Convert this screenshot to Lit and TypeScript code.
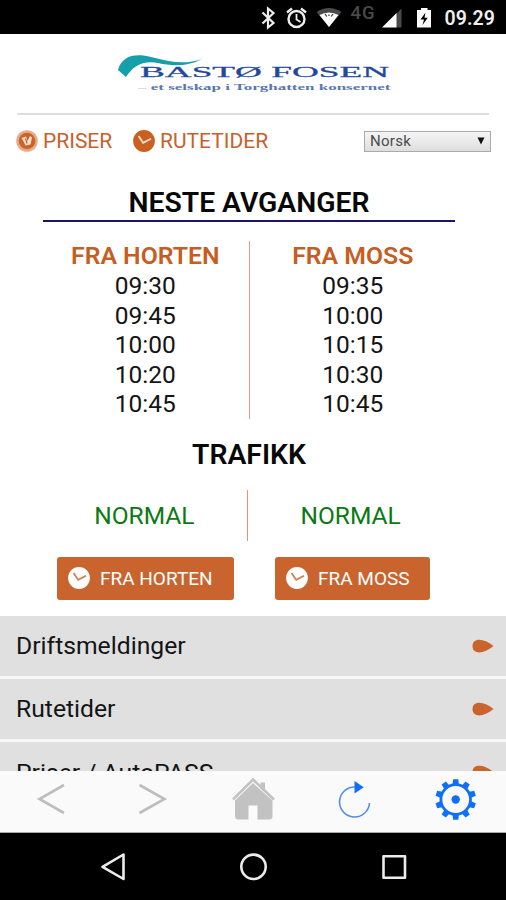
import { LitElement, html, css, svg } from "lit";
import { customElement } from "lit/decorators.js";

const HORTEN = ["09:30", "09:45", "10:00", "10:20", "10:45"];
const MOSS = ["09:35", "10:00", "10:15", "10:30", "10:45"];
const MENU = ["Driftsmeldinger", "Rutetider", "Priser / AutoPASS"];

const clock = (disc: string, hands: string) => html`
  <svg class="clock" width="24" height="24" viewBox="0 0 24 24">
    <circle cx="12" cy="12" r="10.9" fill=${disc} />
    <path d="M6.600 7 L11.200 13.900 L19 9.700" fill="none" stroke=${hands} stroke-width="1.800" />
  </svg>`;

@customElement("app-root")
export class AppRoot extends LitElement {
  static styles = css`
    :host {
      display: flex;
      flex-direction: column;
      width: 506px;
      height: 900px;
      overflow: hidden;
      background: #fff;
      color: #141414;
      font-family: Roboto, "Liberation Sans", sans-serif;
    }
    svg { display: block; flex: none; }
    .status { height: 34px; flex: none; background: #000; display: flex; }
    .page { height: 737px; flex: none; overflow: hidden; display: flex; flex-direction: column; }
    .logo { height: 79px; flex: none; }
    .rule { height: 2px; flex: none; margin: 0 17px; background: #dfdfdf; }
    .tools { height: 52px; flex: none; display: flex; align-items: center; padding: 0 15px 0 15px; }
    .link { display: flex; align-items: center; color: #c9602b; font-size: 21px; line-height: 26px; white-space: nowrap; }
    .link svg { margin-right: 4px; }
    .link span { display: block; }
    .priser { width: 117px; }
    .select {
      margin-left: auto; width: 127px; height: 21px; box-sizing: border-box;
      border: 1px solid #ababab; background: linear-gradient(#f5f5f5, #dedede);
      display: flex; align-items: center; justify-content: space-between;
      padding: 0 5px; font-size: 15px; color: #4a4a4a; letter-spacing: 0.3px;
    }
    .title { text-align: center; font-weight: 600; font-size: 28.3px; color: #080808; white-space: nowrap; }
    .next { height: 55px; box-sizing: border-box; flex: none; margin: 0 51px 0 43px; padding-top: 17px; line-height: 37px; border-bottom: 2px solid #1d1466; }
    .times { height: 178px; flex: none; margin: 19px 50px 0 42px; display: flex; }
    .col { flex: 1; text-align: center; font-size: 24.5px; line-height: 29.6px; }
    .col b { display: block; font-weight: 600; font-size: 24.8px; color: #c65d22; line-height: 30px; }
    .bar { width: 1px; background: #e09c8a; flex: none; }
    .traffic { height: 71px; flex: none; line-height: 72px; padding-right: 8px; }
    .state { height: 51px; flex: none; display: flex; margin: 0 53px 0 42px; }
    .state .bar { width: 1.5px; background: #e29474; }
    .state span { flex: 1; text-align: center; font-size: 24.5px; line-height: 51px; color: #0a7a14; }
    .buttons { flex: none; display: flex; gap: 41px; margin: 15.500px 0 16px 57px; }
    .button { box-sizing: border-box; height: 43px; border-radius: 3px; background: #c9642f; color: #fff; font-size: 19px; display: flex; align-items: center; padding-left: 10px; gap: 9px; white-space: nowrap; }
    .b1 { width: 177px; }
    .b2 { width: 155px; }
    .list { display: flex; flex-direction: column; gap: 3px; background: #f8f8f8; }
    .item { flex: none; height: 60.3px; display: flex; align-items: center; justify-content: space-between; padding: 0 12px 0 16px; background: #e0e0e0; font-size: 24.7px; }
    .bottom { height: 61px; flex: none; background: #fafafa; border-bottom: 1px solid #aaa; }
    .system { height: 67px; flex: none; background: #000; }
  `;

  private status() {
    return svg`<svg width="506" height="34" viewBox="0 0 506 34" font-family="Roboto, sans-serif">
      <path d="M262.5 12.5 L273.5 23 L268 27.5 V8.5 L273.5 13 L262.5 23.5" fill="none" stroke="#eee" stroke-width="2.200" />
      <g fill="none" stroke="#eee" stroke-width="2.400">
        <circle cx="296.5" cy="19" r="8" />
        <path d="M296.5 14 V19.5 L300.5 22" stroke-width="1.8" />
        <path d="M287 12.5 L292 8.5 M306 12.5 L301 8.5" />
      </g>
      <path d="M316.500 12 Q329 4 341.500 12 L329 27 Z" fill="#4a4a4a" />
      <path d="M319.500 15 Q329 10 338.500 15 L329 27 Z" fill="#fff" />
      <path d="M325 14 l1.800 2.500 M333 14 l-1.800 2.500 M329 14.500 v1.500" stroke="#333" stroke-width="1.200" />
      <text x="350.500" y="18.500" font-size="18.500" font-weight="500" textLength="24" fill="#484848">4G</text>
      <path d="M401.500 8.500 V27.500 H396 V14 Z" fill="#4a4a4a" />
      <path d="M382 27.500 L396.500 13 V27.500 Z" fill="#fff" />
      <path d="M421 8 h6.500 v2 h3.500 v17.500 h-14 V10 h4 Z" fill="#fff" />
      <path d="M425.500 12.500 L420.500 19.500 H424 L422.500 25 L427.800 17.800 H424.500 Z" fill="#000" />
      <text x="444.500" y="24.800" font-size="19.500" font-weight="600" textLength="50.500" fill="#eee">09.29</text>
    </svg>`;
  }

  private logo() {
    return svg`<svg width="506" height="79" viewBox="0 34 506 79" font-family="Liberation Serif, serif">
      <path d="M118 70 C122 55 136 53 151 57 C170 62 185 65 202 59 C187 67 171 66 158 63 C143 60 133 66 126 77 Z" fill="#159fab" />
      <text transform="translate(140 77) scale(2.050 1)" font-size="15.500" font-weight="400" textLength="121.500" lengthAdjust="spacingAndGlyphs" fill="#22489c" stroke="#22489c" stroke-width="0.250">BASTØ FOSEN</text>
      <text transform="translate(138 90.300) scale(1.700 1)" font-size="9" font-weight="700" textLength="148.500" lengthAdjust="spacingAndGlyphs" fill="#5878b4"><tspan fill="#b9c6d8">–</tspan> et selskap i Torghatten konsernet</text>
    </svg>`;
  }

  private gear() {
    const teeth = Array.from({ length: 10 }, (_, i) => i * 36);
    return svg`<g transform="translate(455.700 28.500)" fill="#0f70f5">
      ${teeth.map((a) => svg`<path d="M-2.600 -20.300 H2.600 L3.300 -14 H-3.300 Z" transform=${`rotate(${a})`} />`)}
      <circle r="14.800" fill="#fafafa" stroke="#0f70f5" stroke-width="2.800" />
      <circle r="4.200" />
    </g>`;
  }

  render() {
    return html`
      <div class="status">${this.status()}</div>
      <div class="page">
        <div class="logo">${this.logo()}</div>
        <div class="rule"></div>
        <div class="tools">
          <div class="link priser">
            <svg width="24" height="24" viewBox="0 0 24 24">
              <circle cx="12" cy="12" r="10.800" fill="#e5ad8c" />
              <circle cx="12" cy="12" r="8.300" fill="#cc6428" />
              <path d="M6.500 9 L11 7.500 L12.500 12 L15 7 L17 8.500 L15.500 15.500 L10.500 16.500 L8.500 12.500 Z" fill="#f8ded0" />
              <path d="M10.500 9.500 L12 14.500" stroke="#cc6428" stroke-width="1.200" />
            </svg>
            <span>PRISER</span>
          </div>
          <div class="link">${clock("#cb5f20", "#fbe3d3")}<span>RUTETIDER</span></div>
          <div class="select">
            <span>Norsk</span>
            <svg width="8" height="8" viewBox="0 0 8 8"><path d="M0.500 0.500 H7.500 L4 7.500 Z" fill="#111" /></svg>
          </div>
        </div>
        <div class="title next">NESTE AVGANGER</div>
        <div class="times">
          <div class="col"><b>FRA HORTEN</b>${HORTEN.map((t) => html`<div>${t}</div>`)}</div>
          <div class="bar"></div>
          <div class="col"><b>FRA MOSS</b>${MOSS.map((t) => html`<div>${t}</div>`)}</div>
        </div>
        <div class="title traffic">TRAFIKK</div>
        <div class="state"><span>NORMAL</span><div class="bar"></div><span>NORMAL</span></div>
        <div class="buttons">
          <div class="button b1">${clock("#fff", "#cf8055")}<span>FRA HORTEN</span></div>
          <div class="button b2">${clock("#fff", "#cf8055")}<span>FRA MOSS</span></div>
        </div>
        <div class="list">
          ${MENU.map((m) => html`<div class="item"><span>${m}</span>
            <svg width="22" height="14" viewBox="0 0 22 14"><path d="M0.500 7 C0.500 -1.500 11.500 -1.500 21.500 7 C11.500 15.500 0.500 15.500 0.500 7 Z" fill="#cb632c" /></svg>
          </div>`)}
        </div>
      </div>
      <div class="bottom">
        <svg width="506" height="61" viewBox="0 0 506 61">
          <g fill="none" stroke="#bdbdbd" stroke-width="2.600">
            <path d="M64 14 L39.500 28 L64 42" />
            <path d="M139.500 14 L164.500 28 L139.500 42" />
          </g>
          <g fill="#c2c2c2">
            <path d="M260.500 11.500 h4.500 v10 l-4.500 -4 Z" />
            <path d="M233 28.500 L253 8.500 L274 28.500" fill="none" stroke="#c2c2c2" stroke-width="2.600" />
            <path d="M235 29.500 L253 12 L272.500 29.500 V45 Q272.500 48.500 269 48.500 H257.500 V34.500 H248.500 V48.500 H238.500 Q235 48.500 235 45 Z" />
          </g>
          <path d="M355 16 A15 15 0 1 0 369.500 32" fill="none" stroke="#4f8df2" stroke-width="1.600" />
          <path d="M354.500 10 L363.800 16.300 L354.500 22.500 Z" fill="#0f70f5" />
          ${this.gear()}
        </svg>
      </div>
      <div class="system">
        <svg width="506" height="67" viewBox="0 833 506 67">
          <g fill="none" stroke="#ececec" stroke-width="2.600" stroke-linejoin="round">
            <path d="M123.500 854.500 V879 L102.500 866.800 Z" />
            <circle cx="253.500" cy="866.800" r="12.200" />
            <rect x="383.500" y="856.300" width="21.500" height="21.500" />
          </g>
        </svg>
      </div>`;
  }
}
